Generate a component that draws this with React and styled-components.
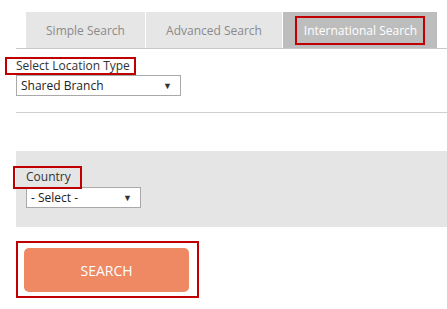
import React from "react";
import styled, { createGlobalStyle } from "styled-components";

const GlobalStyle = createGlobalStyle`
  body {
    margin: 0;
    background: #fff;
    font-family: "Open Sans", "Liberation Sans", sans-serif;
    font-size: 12px;
    color: #333;
  }
`;

const tabs = [
  { label: "Simple Search", width: 119 },
  { label: "Advanced Search", width: 136 },
  { label: "International Search", width: 154, active: true },
];

function App() {
  return (
    <>
      <GlobalStyle />
      <Page>
        <TabBar>
          {tabs.map((tab) => (
            <Tab key={tab.label} $active={tab.active} style={{ width: tab.width }}>
              {tab.active ? <Marked>{tab.label}</Marked> : tab.label}
            </Tab>
          ))}
        </TabBar>

        <Field>
          <Label $shift={11}>Select Location Type</Label>
          <Dropdown $width={165}>
            <span>Shared Branch</span>
            <Arrow>▼</Arrow>
          </Dropdown>
        </Field>

        <Divider />

        <GreyPanel>
          <Label $shift={13} $tall>
            Country
          </Label>
          <Dropdown $width={115} $overlap>
            <span>- Select -</span>
            <Arrow>▼</Arrow>
          </Dropdown>
        </GreyPanel>

        <ButtonFrame>
          <SearchButton>SEARCH</SearchButton>
        </ButtonFrame>
      </Page>
    </>
  );
}

const Page = styled.div`
  padding: 12px 0 0 16px;
`;

const TabBar = styled.div`
  display: flex;
  gap: 1px;
  padding-left: 10px;
  border-bottom: 1px solid #c8c8c8;
`;

const Tab = styled.div`
  height: 36px;
  display: flex;
  align-items: center;
  justify-content: center;
  background: ${(p) => (p.$active ? "#bdbdbd" : "#e6e6e6")};
  color: ${(p) => (p.$active ? "#fff" : "#8a8a8a")};
  font-size: 12px;
`;

const Marked = styled.span`
  border: 2px solid #c00000;
  padding: 4px 6px 3px 7px;
  line-height: 18px;
`;

const Field = styled.div`
  display: flex;
  flex-direction: column;
  align-items: flex-start;
  margin-top: 8px;
`;

const Label = styled.label`
  position: relative;
  z-index: 1;
  display: inline-block;
  border: 2px solid #c00000;
  margin-left: -${(p) => p.$shift}px;
  padding: ${(p) => (p.$tall ? "2px 9px 3px" : "0 4px 0")};
  padding-left: ${(p) => p.$shift - 2}px;
  line-height: 14px;
  font-size: 12px;
  color: #333;
`;

const Dropdown = styled.div`
  box-sizing: border-box;
  width: ${(p) => p.$width}px;
  height: 21px;
  margin-top: ${(p) => (p.$overlap ? "-2px" : "0")};
  display: flex;
  align-items: center;
  justify-content: space-between;
  padding: 0 8px 0 4px;
  background: #fff;
  border: 1px solid #a9a9a9;
  font-size: 12px;
  color: #222;
`;

const Arrow = styled.span`
  font-size: 9px;
  color: #333;
`;

const Divider = styled.div`
  height: 1px;
  background: #cfcfcf;
  margin-top: 16px;
`;

const GreyPanel = styled.div`
  display: flex;
  flex-direction: column;
  align-items: flex-start;
  background: #e5e5e5;
  margin-top: 38px;
  height: 76px;
  box-sizing: border-box;
  padding: 15px 0 0 10px;
`;

const ButtonFrame = styled.div`
  display: inline-block;
  margin-top: 14px;
  border: 2px solid #c00000;
  padding: 5px 8px 4px 6px;
`;

const SearchButton = styled.button`
  display: block;
  width: 165px;
  height: 44px;
  border: none;
  border-radius: 5px;
  background: #ee8964;
  color: #fff;
  font-family: "Open Sans", "Liberation Sans", sans-serif;
  font-size: 14px;
`;

export default App;
